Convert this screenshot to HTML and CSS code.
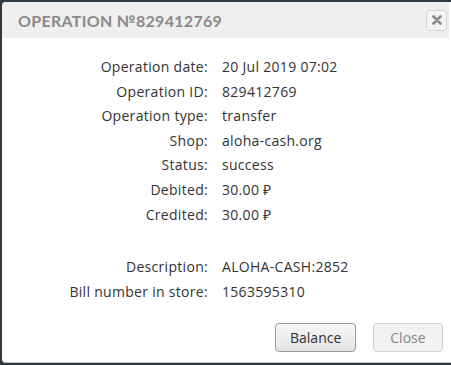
FILE: index.html
```html
<!DOCTYPE html>
<html lang="en">
<head>
  <meta charset="UTF-8">
  <title>Operation №829412769</title>
  <link rel="stylesheet" href="styles.css">
</head>
<body>
  <div class="modal">
    <div class="modal-header">
      <div class="modal-title">Operation №829412769</div>
      <button class="close-x" aria-label="Close">
        <svg width="10" height="10" viewBox="0 0 10 10"><path d="M1.5 1.5 L8.5 8.5 M8.5 1.5 L1.5 8.5" stroke="#8a8a8a" stroke-width="2.6" stroke-linecap="round"/></svg>
      </button>
    </div>
    <div class="modal-body">
      <div class="info-grid">
        <span class="label">Operation date:</span><span class="value">20 Jul 2019 07:02</span>
        <span class="label">Operation ID:</span><span class="value">829412769</span>
        <span class="label">Operation type:</span><span class="value">transfer</span>
        <span class="label">Shop:</span><span class="value">aloha-cash.org</span>
        <span class="label">Status:</span><span class="value">success</span>
        <span class="label">Debited:</span><span class="value">30.00 ₽</span>
        <span class="label">Credited:</span><span class="value">30.00 ₽</span>
        <span class="spacer"></span><span class="spacer"></span>
        <span class="label">Description:</span><span class="value">ALOHA-CASH:2852</span>
        <span class="label">Bill number in store:</span><span class="value">1563595310</span>
      </div>
    </div>
    <div class="modal-footer">
      <button class="btn btn-primary">Balance</button>
      <button class="btn btn-muted">Close</button>
    </div>
  </div>
</body>
</html>
```
FILE: styles.css
```css
body {
  margin: 0;
  background: #2e3b45;
  font-family: "Open Sans", sans-serif;
  overflow: hidden;
}
.modal {
  margin: 2px 0 0 2px;
  width: 460px;
  height: 360px;
  background: #fff;
  border-radius: 4px 0 0 4px;
  border-bottom: 1px solid #c8c8c8;
  display: flex;
  flex-direction: column;
}
.modal-header {
  height: 36px;
  background: #efefef;
  border-radius: 4px 0 0 0;
  display: flex;
  align-items: center;
  padding: 0 0 0 16px;
  width: 431px;
  justify-content: space-between;
}
.modal-title {
  text-transform: uppercase;
  font-family: "Lato", sans-serif;
  font-weight: 700;
  font-size: 16px;
  letter-spacing: 0.3px;
  color: #8a8a8a;
}
.close-x {
  width: 21px;
  height: 21px;
  margin-right: 2px;
  border: 1px solid #d6d6d6;
  border-radius: 3px;
  background: #f4f4f4;
  display: flex;
  align-items: center;
  justify-content: center;
  padding: 0;
}
.modal-body {
  padding: 17px 0 0 0;
  flex: 1;
}
.info-grid {
  display: grid;
  grid-template-columns: 206px auto;
  column-gap: 14px;
  row-gap: 0;
  font-size: 14px;
  letter-spacing: 0.3px;
  color: #333;
  line-height: 24.6px;
}
.label {
  text-align: right;
}
.spacer {
  height: 28px;
}
.modal-footer {
  display: flex;
  gap: 17px;
  padding: 0 0 10px 273px;
}
.btn {
  font-family: "Open Sans", sans-serif;
  font-size: 14px;
  height: 29px;
  padding: 0 14px;
  border-radius: 4px;
  background: linear-gradient(#f7f7f7, #e4e4e4);
}
.btn-primary {
  border: 1px solid #9a9a9a;
  color: #333;
}
.btn-muted {
  padding: 0 16px;
  border: 1px solid #d0d0d0;
  color: #888;
  background: #f2f2f2;
}
```
